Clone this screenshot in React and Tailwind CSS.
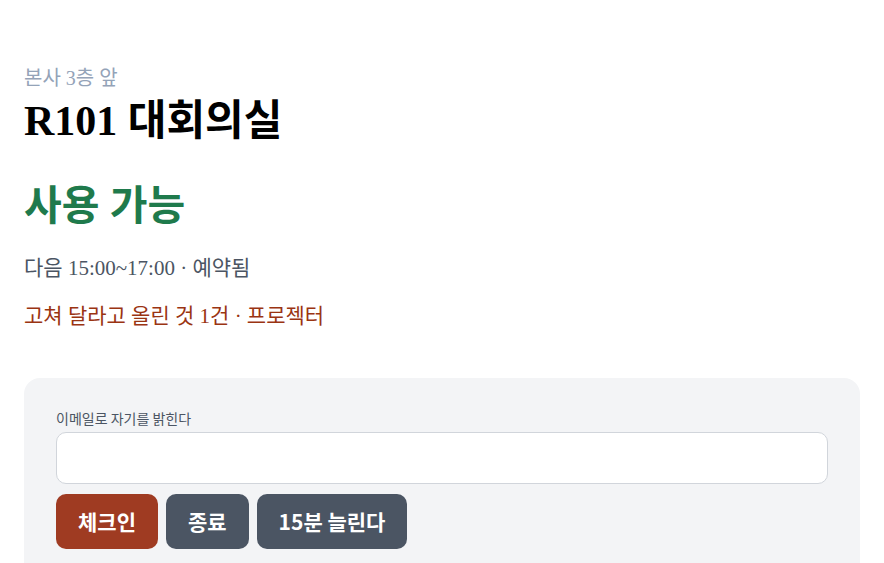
import React from 'react';

const serif = "font-['Liberation_Serif','Noto_Sans_CJK_KR',serif]";
const sans = "font-['Noto_Sans_CJK_KR','Noto_Sans',sans-serif]";

export default function App() {
  return (
    <div className={`min-h-screen bg-white px-6 pt-[64px] ${serif}`}>
      <p className="text-[20px] leading-[28px] text-[#94a3b8]">본사 3층 앞</p>
      <h1 className="mt-[5px] text-[42px] font-bold leading-[48px] text-black">R101 대회의실</h1>

      <div className="mt-[38px] text-[41px] font-bold leading-[46px] text-[#1f7a4c]">사용 가능</div>

      <p className="mt-[25px] text-[21px] leading-[28px] text-[#4b5563]">다음 15:00~17:00 · 예약됨</p>
      <p className="mt-[20px] text-[21px] leading-[28px] text-[#9a3412]">고쳐 달라고 올린 것 1건 · 프로젝터</p>

      {/* 체크인 카드 */}
      <div className={`mt-[48px] rounded-2xl bg-[#f3f4f6] px-8 pt-[30px] pb-6 ${sans}`}>
        <label className="block text-[14px] leading-[20px] text-[#4b5563]">이메일로 자기를 밝힌다</label>
        <input
          type="email"
          className="mt-1 block h-[52px] w-full rounded-[10px] border border-[#d1d5db] bg-white px-3 text-[16px] outline-none"
        />
        <div className="mt-[10px] flex gap-2">
          <button className="h-[55px] rounded-[10px] bg-[#9f3b22] px-[22px] text-[21px] font-bold text-white">체크인</button>
          <button className="h-[55px] rounded-[10px] bg-[#4b5563] px-[22px] text-[21px] font-bold text-white">종료</button>
          <button className="h-[55px] rounded-[10px] bg-[#4b5563] px-[22px] text-[21px] font-bold text-white">15분 늘린다</button>
        </div>
        <p className="mt-[10px] text-[14px] leading-[20px] text-[#4b5563]">반른 시간 없음</p>
      </div>
    </div>
  );
}
